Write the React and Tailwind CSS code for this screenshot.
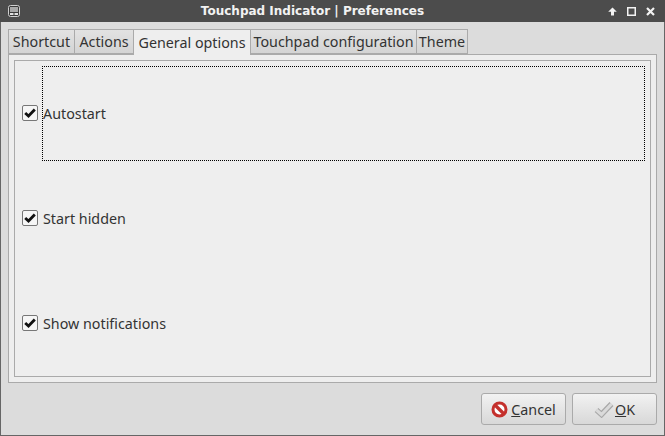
import React from 'react';

const tabs = [
  { label: 'Shortcut', w: 'w-[66px]' },
  { label: 'Actions', w: 'w-[59px]' },
  { label: 'General options', w: 'w-[117px]', active: true },
  { label: 'Touchpad configuration', w: 'w-[166px]' },
  { label: 'Theme', w: 'w-[52px]' },
];

const CheckRow = ({ label, focused }) => (
  <div className={`flex items-center pl-[2px] ${focused ? 'mb-[-1px] h-[95px]' : 'h-[94px]'}`}>
    <div className={`flex h-4 w-4 shrink-0 items-center justify-center rounded-[2px] border border-[#777] bg-[#f6f6f6] ${focused ? 'mb-[1px]' : ''}`}>
      <svg width="12" height="10" viewBox="0 0 12 10">
        <path d="M1.2 5 L4.5 8 L10.8 1.5" fill="none" stroke="#111" strokeWidth="2.8" />
      </svg>
    </div>
    <div className={`ml-1 flex h-full flex-1 items-center ${focused ? 'border border-dotted border-black pt-[1px]' : 'border border-transparent pt-[2px]'}`}>
      <span>{label}</span>
    </div>
  </div>
);

const App = () => {
  return (
    <div className="flex h-[436px] w-[665px] flex-col overflow-hidden bg-[#dcdcdc] font-['Noto_Sans',sans-serif] text-[14.3px] text-[#333]">
      {/* Title bar */}
      <div className="flex h-[22px] shrink-0 items-center bg-[#4c4c4c] pl-2 pr-[10px]">
        <svg width="12" height="12" viewBox="0 0 12 12" className="shrink-0">
          <rect x="0.5" y="0.5" width="11" height="11" rx="2" fill="#3a3a3a" stroke="#d0d0d0" />
          <rect x="2" y="2" width="8" height="5" fill="#a8a8a8" />
          <rect x="2" y="8" width="3.5" height="2" fill="#e0e0e0" />
          <rect x="6.5" y="8" width="3.5" height="2" fill="#e0e0e0" />
        </svg>
        <div className="flex-1 pr-[3px] text-center font-['DejaVu_Sans',sans-serif] text-[12px] font-bold text-[#f2f2f2]">
          Touchpad Indicator | Preferences
        </div>
        <div className="flex items-center gap-[10px]">
          <svg width="9" height="9" viewBox="0 0 9 9">
            <path d="M4.5 0.5 L8.8 4.8 H6 V8.5 H3 V4.8 H0.2 Z" fill="#f2f2f2" />
          </svg>
          <svg width="9" height="9" viewBox="0 0 9 9">
            <rect x="0.75" y="0.75" width="7.5" height="7.5" fill="none" stroke="#f2f2f2" strokeWidth="1.5" />
          </svg>
          <svg width="9" height="9" viewBox="0 0 9 9">
            <path d="M1 1 L8 8 M8 1 L1 8" stroke="#f2f2f2" strokeWidth="2.2" />
          </svg>
        </div>
      </div>

      {/* Window body */}
      <div className="flex flex-1 flex-col border-x border-b border-[#666] pl-[7px] pr-[7px] pt-[7px]">
        {/* Tabs */}
        <div className="relative z-10 flex h-[25px]">
          {tabs.map((tab) => (
            <div
              key={tab.label}
              className={`flex items-center justify-center border-t border-l border-[#aaa] last:border-r ${tab.w} ${
                tab.active ? 'h-[26px] bg-[#eeeeee]' : 'h-[25px] border-b bg-gradient-to-b from-[#e2e2e2] to-[#d4d4d4]'
              }`}
            >
              {tab.label}
            </div>
          ))}
        </div>

        {/* Notebook panel */}
        <div className="h-[329px] border border-[#aaa] bg-[#eeeeee] p-[5px]">
          <div className="flex h-full flex-col gap-[11px] border border-[#aaa] p-[5px]">
            <CheckRow label="Autostart" focused />
            <CheckRow label="Start hidden" />
            <CheckRow label="Show notifications" />
          </div>
        </div>

        {/* Buttons */}
        <div className="mt-[10px] flex justify-end gap-[6px]">
          <button className="flex h-8 w-[85px] items-center justify-center rounded-[3px] border border-[#aaa] bg-gradient-to-b from-[#f2f2f2] to-[#d8d8d8]">
            <svg width="17" height="17" viewBox="0 0 17 17" className="mr-[3px]">
              <circle cx="8.5" cy="8.5" r="6.5" fill="#fff" stroke="#c4302c" strokeWidth="3" />
              <path d="M4 4 L13 13" stroke="#c4302c" strokeWidth="3.4" />
            </svg>
            <span className="pt-[2px]"><span className="underline">C</span>ancel</span>
          </button>
          <button className="flex h-8 w-[85px] items-center justify-center rounded-[3px] border border-[#aaa] bg-gradient-to-b from-[#f2f2f2] to-[#d8d8d8]">
            <svg width="20" height="17" viewBox="0 0 20 17" className="mr-[1px]">
              <path d="M2.5 9 L7.5 13.5 L17.5 3" fill="none" stroke="#a8a8a8" strokeWidth="5.5" />
              <path d="M2.5 9 L7.5 13.5 L17.5 3" fill="none" stroke="#dadada" strokeWidth="3.2" />
            </svg>
            <span className="pt-[2px]"><span className="underline">O</span>K</span>
          </button>
        </div>
      </div>
    </div>
  );
};

export default App;
